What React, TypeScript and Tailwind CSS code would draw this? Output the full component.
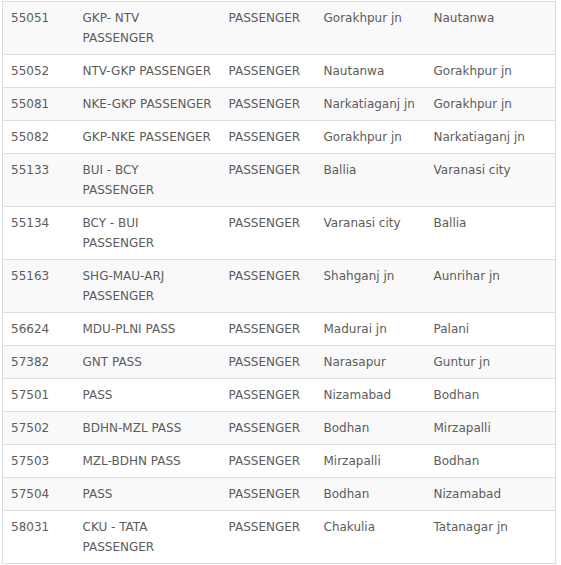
const rows: [string, string, string, string, string][] = [
  ["55051", "GKP- NTV\nPASSENGER", "PASSENGER", "Gorakhpur jn", "Nautanwa"],
  ["55052", "NTV-GKP PASSENGER", "PASSENGER", "Nautanwa", "Gorakhpur jn"],
  ["55081", "NKE-GKP PASSENGER", "PASSENGER", "Narkatiaganj jn", "Gorakhpur jn"],
  ["55082", "GKP-NKE PASSENGER", "PASSENGER", "Gorakhpur jn", "Narkatiaganj jn"],
  ["55133", "BUI - BCY\nPASSENGER", "PASSENGER", "Ballia", "Varanasi city"],
  ["55134", "BCY - BUI\nPASSENGER", "PASSENGER", "Varanasi city", "Ballia"],
  ["55163", "SHG-MAU-ARJ\nPASSENGER", "PASSENGER", "Shahganj jn", "Aunrihar jn"],
  ["56624", "MDU-PLNI PASS", "PASSENGER", "Madurai jn", "Palani"],
  ["57382", "GNT PASS", "PASSENGER", "Narasapur", "Guntur jn"],
  ["57501", "PASS", "PASSENGER", "Nizamabad", "Bodhan"],
  ["57502", "BDHN-MZL PASS", "PASSENGER", "Bodhan", "Mirzapalli"],
  ["57503", "MZL-BDHN PASS", "PASSENGER", "Mirzapalli", "Bodhan"],
  ["57504", "PASS", "PASSENGER", "Bodhan", "Nizamabad"],
  ["58031", "CKU - TATA\nPASSENGER", "PASSENGER", "Chakulia", "Tatanagar jn"],
];

const widths = ["w-[72px]", "w-[146px]", "w-[95px]", "w-[110px]", "w-[130px]"];

export default function App() {
  return (
    <div className="w-[561px] h-[565px] bg-white overflow-hidden pt-[1px] pl-[2px]">
      <table className="table-fixed w-[554px] border-collapse border-x border-[#dddddd] text-[12px] leading-5 text-[#5c5c5c] font-['DejaVu_Sans',Verdana,sans-serif]">
        <tbody>
          {rows.map((r, i) => (
            <tr key={r[0]} className={i % 2 === 0 ? "bg-[#f9f9f9]" : "bg-white"}>
              {r.map((c, j) => (
                <td
                  key={j}
                  className={`${widths[j]} border-t border-b border-[#dddddd] pl-2 pr-1 pt-[6px] pb-[6px] align-top whitespace-pre-line`}
                >
                  {c}
                </td>
              ))}
            </tr>
          ))}
        </tbody>
      </table>
    </div>
  );
}
